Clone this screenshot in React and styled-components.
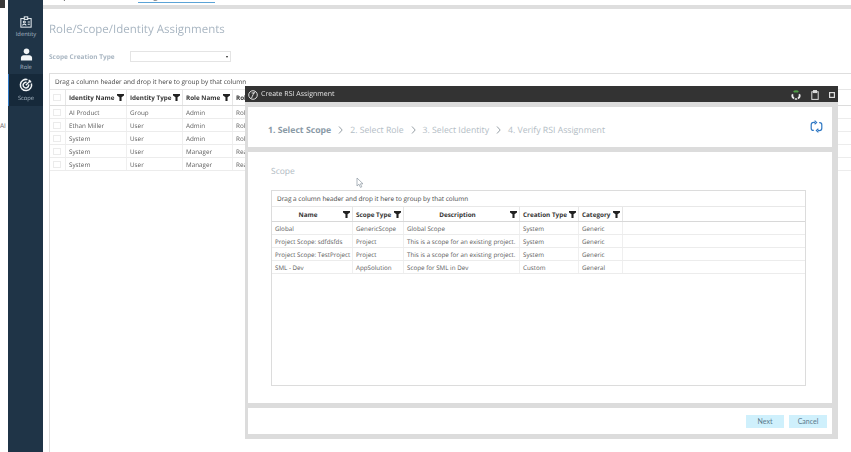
import React from 'react';
import styled, { createGlobalStyle } from 'styled-components';

const outerColumns = '16px 61px 56px 50px 450px 185px';
const innerColumns = '81px 51px 116px 59px 44px 1fr';

const outerHeaders = ['', 'Identity Name', 'Identity Type', 'Role Name', 'Role Description', 'Scope Name'];
const outerRows = [
  ['AI Product', 'Group', 'Admin', 'Role for admins'],
  ['Ethan Miller', 'User', 'Admin', 'Role for admins'],
  ['System', 'User', 'Admin', 'Role for admins'],
  ['System', 'User', 'Manager', 'Read only'],
  ['System', 'User', 'Manager', 'Read only'],
];

const innerHeaders = [
  { label: 'Name', wide: true },
  { label: 'Scope Type' },
  { label: 'Description', wide: true },
  { label: 'Creation Type' },
  { label: 'Category' },
];
const innerRows = [
  ['Global', 'GenericScope', 'Global Scope', 'System', 'Generic'],
  ['Project Scope: sdfdsfds', 'Project', 'This is a scope for an existing project.', 'System', 'Generic'],
  ['Project Scope: TestProject', 'Project', 'This is a scope for an existing project.', 'System', 'Generic'],
  ['SML - Dev', 'AppSolution', 'Scope for SML in Dev', 'Custom', 'General'],
];

const FilterIcon = () => (
  <FilterSvg viewBox="0 0 10 10">
    <path d="M0 0h10v2.200L6.500 4.500V10h-3V4.500L0 2.200z" fill="#222" />
  </FilterSvg>
);

const IdentityIcon = () => (
  <svg width="12" height="12" viewBox="0 0 14 14" fill="none" stroke="#e6ecf0" strokeWidth="1.2">
    <rect x="1" y="3" width="12" height="10" />
    <rect x="5" y="1" width="4" height="3" fill="#1f3447" />
    <circle cx="5" cy="7" r="1.2" />
    <path d="M3 11c0-2 4-2 4 0M9 7h2.500M9 9.500h2.500" />
  </svg>
);

const RoleIcon = () => (
  <svg width="13" height="13" viewBox="0 0 14 14" fill="#f2f5f7">
    <circle cx="7" cy="3.600" r="3" />
    <path d="M1 13.500V10.500c0-1.800 1.500-2.700 3-2.700h6c1.500 0 3 .9 3 2.700v3z" />
  </svg>
);

const ScopeIcon = () => (
  <svg width="14" height="14" viewBox="0 0 14 14" fill="none" stroke="#f2f5f7" strokeWidth="1.500">
    <path d="M8.500 1.600A5.600 5.600 0 1 0 12.400 5.500" />
    <path d="M7.600 4.400A2.800 2.800 0 1 0 9.600 6.400" />
    <path d="M6.800 7.200L11.500 2.500M10.200 1.800l.1 2 2 .1" strokeWidth="1.300" />
  </svg>
);

const LogoIcon = () => (
  <svg width="10" height="10" viewBox="0 0 10 10" fill="none" stroke="#eee" strokeWidth="0.900">
    <circle cx="5" cy="5" r="4.300" />
    <path d="M6.800 1.600C5.600 3.400 4.600 5.600 3.400 8.400M3.600 3h3" />
  </svg>
);

const RecycleIcon = () => (
  <svg width="10" height="10" viewBox="0 0 10 10" fill="none">
    <path d="M3 2.200C3.600 1 6.400 1 7 2.200" stroke="#4f9a45" strokeWidth="2" />
    <path d="M1.800 4.200C.8 6 1.400 7.400 3 8.400" stroke="#ececec" strokeWidth="1.800" />
    <path d="M8.200 4.200C9.200 6 8.600 7.400 7 8.400" stroke="#ececec" strokeWidth="1.800" />
    <path d="M3.800 9h2.400" stroke="#ececec" strokeWidth="1.400" />
  </svg>
);

const ClipboardIcon = () => (
  <svg width="8" height="10" viewBox="0 0 8 10" fill="none" stroke="#ddd" strokeWidth="1">
    <rect x="0.800" y="1.800" width="6.400" height="7.600" />
    <rect x="2.500" y="0.600" width="3" height="2" fill="#ddd" />
  </svg>
);

const SquareIcon = () => (
  <svg width="6" height="6" viewBox="0 0 6 6" fill="none" stroke="#ddd" strokeWidth="1.200">
    <rect x="0.600" y="0.600" width="4.800" height="4.800" />
  </svg>
);

const CycleIcon = () => (
  <svg width="13" height="13" viewBox="0 0 13 13" fill="none" stroke="#2f78c4" strokeWidth="1.200">
    <path d="M5 2.400H3.600C2.200 2.400 1.200 3.400 1.200 4.800v3.400c0 1.200.8 2.200 2 2.200h.6" />
    <path d="M8 10.600h1.400c1.400 0 2.400-1 2.400-2.400V4.800c0-1.200-.8-2.200-2-2.200h-.6" />
    <path d="M4.600.6l2 1.800-2 1.800M8.400 8.800l-2 1.800 2 1.800" />
  </svg>
);

const ChevronIcon = () => (
  <svg width="5" height="8" viewBox="0 0 5 8" fill="none" stroke="#8a949c" strokeWidth="0.900">
    <path d="M1 .5L4.200 4 1 7.500" />
  </svg>
);

const CursorIcon = () => (
  <CursorSvg width="8" height="12" viewBox="0 0 8 12">
    <path d="M1 1v8l2-1.800 1.400 3.200 1.400-.6-1.400-3H7z" fill="#fff" stroke="#8b96a0" strokeWidth="0.700" />
  </CursorSvg>
);

const App = () => (
  <>
    <GlobalStyle />
    <Page>
      <LeftStrip>
        <StripTab />
        <StripLabel>AI</StripLabel>
      </LeftStrip>

      <Sidebar>
        <NavItem>
          <IdentityIcon />
          <NavLabel>Identity</NavLabel>
        </NavItem>
        <NavItem>
          <RoleIcon />
          <NavLabel>Role</NavLabel>
        </NavItem>
        <NavItem $active>
          <ScopeIcon />
          <NavLabel>Scope</NavLabel>
        </NavItem>
      </Sidebar>

      <Main>
        <TopBar>
          <TopTab>Scope</TopTab>
          <TopTab $active>Assignments</TopTab>
        </TopBar>

        <Content>
          <PageTitle>Role/Scope/Identity Assignments</PageTitle>
          <FilterRow>
            <FilterLabel>Scope Creation Type</FilterLabel>
            <SelectBox>
              <SelectArrow />
            </SelectBox>
          </FilterRow>

          <OuterGrid>
            <GroupHint>Drag a column header and drop it here to group by that column</GroupHint>
            <OuterHeader>
              {outerHeaders.map((header, i) => (
                <OuterHeaderCell key={i}>
                  {i === 0 ? <CheckBox /> : (
                    <>
                      <span>{header}</span>
                      <FilterIcon />
                    </>
                  )}
                </OuterHeaderCell>
              ))}
            </OuterHeader>
            {outerRows.map((row, i) => (
              <OuterRow key={i}>
                <OuterCell><CheckBox /></OuterCell>
                {row.map((value, j) => <OuterCell key={j}>{value}</OuterCell>)}
                <OuterCell />
              </OuterRow>
            ))}
          </OuterGrid>
        </Content>
      </Main>

      <Dialog>
        <TitleBar>
          <LogoIcon />
          <DialogTitle>Create RSI Assignment</DialogTitle>
          <TitleActions>
            <RecycleIcon />
            <ClipboardIcon />
            <SquareIcon />
          </TitleActions>
        </TitleBar>

        <DialogBody>
          <StepCard>
            <Step $current>1. Select Scope</Step>
            <ChevronIcon />
            <Step>2. Select Role</Step>
            <ChevronIcon />
            <Step>3. Select Identity</Step>
            <ChevronIcon />
            <Step>4. Verify RSI Assignment</Step>
            <StepAction><CycleIcon /></StepAction>
          </StepCard>

          <ScopeCard>
            <ScopeTitle>Scope</ScopeTitle>
            <CursorIcon />
            <InnerGrid>
              <InnerHint>Drag a column header and drop it here to group by that column</InnerHint>
              <InnerHeader>
                {innerHeaders.map((col) => (
                  <InnerHeaderCell key={col.label}>
                    <HeaderLabel $wide={col.wide}>{col.label}</HeaderLabel>
                    <FilterIcon />
                  </InnerHeaderCell>
                ))}
                <InnerHeaderCell />
              </InnerHeader>
              {innerRows.map((row) => (
                <InnerRow key={row[0]}>
                  {row.map((value, j) => <InnerCell key={j}>{value}</InnerCell>)}
                  <InnerCell />
                </InnerRow>
              ))}
            </InnerGrid>
          </ScopeCard>

          <FooterCard>
            <ActionButton>Next</ActionButton>
            <ActionButton>Cancel</ActionButton>
          </FooterCard>
        </DialogBody>
      </Dialog>
    </Page>
  </>
);

const GlobalStyle = createGlobalStyle`
  html, body {
    margin: 0;
    padding: 0;
    background: #fff;
    overflow: hidden;
  }
  * {
    box-sizing: border-box;
  }
`;

const Page = styled.div`
  position: relative;
  display: flex;
  width: 851px;
  height: 452px;
  overflow: hidden;
  font-family: "Open Sans", "Liberation Sans", sans-serif;
  color: #4c5962;
  text-rendering: geometricPrecision;
  filter: blur(0.3px);
`;

const LeftStrip = styled.div`
  width: 8px;
  flex-shrink: 0;
  background: #fff;
  font-size: 6.5px;
  color: #666;
`;

const StripTab = styled.div`
  width: 5px;
  height: 8px;
  background: #3a3a3a;
`;

const StripLabel = styled.div`
  margin-top: 113px;
`;

const Sidebar = styled.nav`
  width: 35px;
  flex-shrink: 0;
  padding-top: 10px;
  background: #1f3447;
`;

const NavItem = styled.div`
  display: flex;
  flex-direction: column;
  align-items: center;
  justify-content: center;
  gap: 2px;
  height: 32px;
  padding-top: ${({ $active }) => ($active ? '0' : '2px')};
  background: ${({ $active }) => ($active ? '#16293a' : 'transparent')};
  border-left: 1px solid ${({ $active }) => ($active ? '#2f78c4' : 'transparent')};
`;

const NavLabel = styled.span`
  font-size: 5.8px;
  line-height: 8px;
  color: #a9b9c6;
`;

const Main = styled.main`
  flex: 1;
  min-width: 0;
  overflow: hidden;
`;

const TopBar = styled.div`
  display: flex;
  align-items: flex-end;
  gap: 54px;
  height: 9px;
  padding-left: 7px;
  border-bottom: 4px solid #dedede;
  overflow: hidden;
`;

const TopTab = styled.div`
  flex-shrink: 0;
  width: ${({ $active }) => ($active ? '77px' : '34px')};
  margin-bottom: 2px;
  font-size: 8px;
  line-height: 10px;
  font-weight: 600;
  color: #666;
  border-bottom: 1px solid ${({ $active }) => ($active ? '#5ba3d6' : 'transparent')};
`;

const Content = styled.div`
  padding: 13px 0 0 6px;
`;

const PageTitle = styled.h1`
  margin: 0;
  font-size: 11.5px;
  line-height: 16px;
  font-weight: 400;
  color: #a9b6c2;
  white-space: nowrap;
`;

const FilterRow = styled.div`
  display: flex;
  align-items: center;
  margin-top: 13px;
`;

const FilterLabel = styled.label`
  width: 81px;
  font-size: 6.5px;
  font-weight: 700;
  color: #a9b6c2;
  white-space: nowrap;
`;

const SelectBox = styled.div`
  display: flex;
  align-items: center;
  justify-content: flex-end;
  width: 101px;
  height: 11px;
  padding-right: 2px;
  border: 1px solid #e4e4e4;
`;

const SelectArrow = styled.span`
  border-left: 1.5px solid transparent;
  border-right: 1.5px solid transparent;
  border-top: 2px solid #222;
`;

const OuterGrid = styled.div`
  margin-top: 11px;
  width: 830px;
  height: 380px;
  border: 1px solid #dedede;
  border-right: 0;
`;

const GroupHint = styled.div`
  height: 15px;
  padding-left: 5px;
  font-size: 6.45px;
  line-height: 15px;
  color: #444;
  white-space: nowrap;
`;

const OuterHeader = styled.div`
  display: grid;
  grid-template-columns: ${outerColumns};
  height: 17px;
  border-top: 1px solid #e6e6e6;
  border-bottom: 1px solid #dcdcdc;
`;

const OuterHeaderCell = styled.div`
  display: flex;
  align-items: center;
  justify-content: space-between;
  padding: 0 2px 0 3px;
  font-size: 6.3px;
  font-weight: 700;
  color: #333;
  border-right: 1px solid #e6e6e6;
  white-space: nowrap;
  overflow: hidden;
`;

const OuterRow = styled.div`
  display: grid;
  grid-template-columns: ${outerColumns};
  height: 13px;
  border-bottom: 1px solid #ececec;
`;

const OuterCell = styled.div`
  display: flex;
  align-items: center;
  padding: 0 3px;
  font-size: 6.3px;
  color: #5c5c5c;
  border-right: 1px solid #efefef;
  white-space: nowrap;
  overflow: hidden;
`;

const CheckBox = styled.span`
  width: 8px;
  height: 7px;
  border: 1px solid #ebebeb;
`;

const FilterSvg = styled.svg`
  width: 7px;
  height: 7px;
  flex-shrink: 0;
  margin-left: 2px;
`;

const Dialog = styled.section`
  position: absolute;
  top: 86px;
  left: 245px;
  display: flex;
  flex-direction: column;
  width: 593px;
  height: 353px;
  background: #dcdcdc;
`;

const TitleBar = styled.header`
  display: flex;
  align-items: center;
  gap: 3px;
  height: 16px;
  padding: 1px 3px 0;
  background: #333;
`;

const DialogTitle = styled.span`
  font-size: 7px;
  color: #e4e4e4;
`;

const TitleActions = styled.div`
  display: flex;
  align-items: center;
  gap: 10px;
  margin-left: auto;
`;

const DialogBody = styled.div`
  display: flex;
  flex: 1;
  flex-direction: column;
  gap: 5px;
  padding: 5px 6px 5px 3px;
`;

const StepCard = styled.div`
  display: flex;
  align-items: center;
  gap: 7px;
  height: 40px;
  padding: 5px 9px 0 20px;
  background: #fff;
`;

const Step = styled.span`
  font-size: 8.7px;
  font-weight: ${({ $current }) => ($current ? 700 : 400)};
  color: ${({ $current }) => ($current ? '#8a9aa6' : '#b3bdc5')};
  white-space: nowrap;
`;

const StepAction = styled.div`
  display: flex;
  margin: -6px 0 0 auto;
`;

const ScopeCard = styled.div`
  position: relative;
  display: flex;
  flex-direction: column;
  flex: 1;
  padding: 14px 26px 17px 23px;
  background: #fff;
`;

const ScopeTitle = styled.h2`
  margin: 0;
  height: 24px;
  font-size: 8.5px;
  line-height: 12px;
  font-weight: 400;
  color: #b0bac2;
`;

const CursorSvg = styled.svg`
  position: absolute;
  top: 25px;
  left: 108px;
`;

const InnerGrid = styled.div`
  flex: 1;
  border: 1px solid #dcdcdc;
`;

const InnerHint = styled.div`
  height: 15px;
  padding-left: 5px;
  font-size: 6.45px;
  line-height: 15px;
  color: #444;
  white-space: nowrap;
`;

const InnerHeader = styled.div`
  display: grid;
  grid-template-columns: ${innerColumns};
  height: 16px;
  border-top: 1px solid #e8e8e8;
  border-bottom: 1px solid #d8d8d8;
`;

const InnerHeaderCell = styled.div`
  display: flex;
  align-items: center;
  justify-content: space-between;
  padding: 0 2px 0 3px;
  font-size: 6.35px;
  font-weight: 700;
  color: #333;
  border-right: 1px solid #e6e6e6;
  white-space: nowrap;
  overflow: hidden;
  &:last-child {
    border-right: 0;
  }
`;

const HeaderLabel = styled.span`
  flex: ${({ $wide }) => ($wide ? 1 : 'none')};
  text-align: ${({ $wide }) => ($wide ? 'center' : 'left')};
`;

const InnerRow = styled.div`
  display: grid;
  grid-template-columns: ${innerColumns};
  height: 13px;
  border-bottom: 1px solid #ececec;
`;

const InnerCell = styled.div`
  display: flex;
  align-items: center;
  padding: 0 3px;
  font-size: 6.25px;
  color: #5c5c5c;
  border-right: 1px solid #efefef;
  white-space: nowrap;
  overflow: hidden;
  &:last-child {
    border-right: 0;
  }
`;

const FooterCard = styled.div`
  display: flex;
  align-items: center;
  justify-content: flex-end;
  gap: 5px;
  height: 26px;
  padding-right: 5px;
  background: #fff;
`;

const ActionButton = styled.button`
  width: 38px;
  height: 13px;
  padding: 0;
  border: 0;
  background: #cff0fc;
  font-family: Lato, "Open Sans", sans-serif;
  font-size: 7px;
  color: #5b7a8c;
`;

export default App;
